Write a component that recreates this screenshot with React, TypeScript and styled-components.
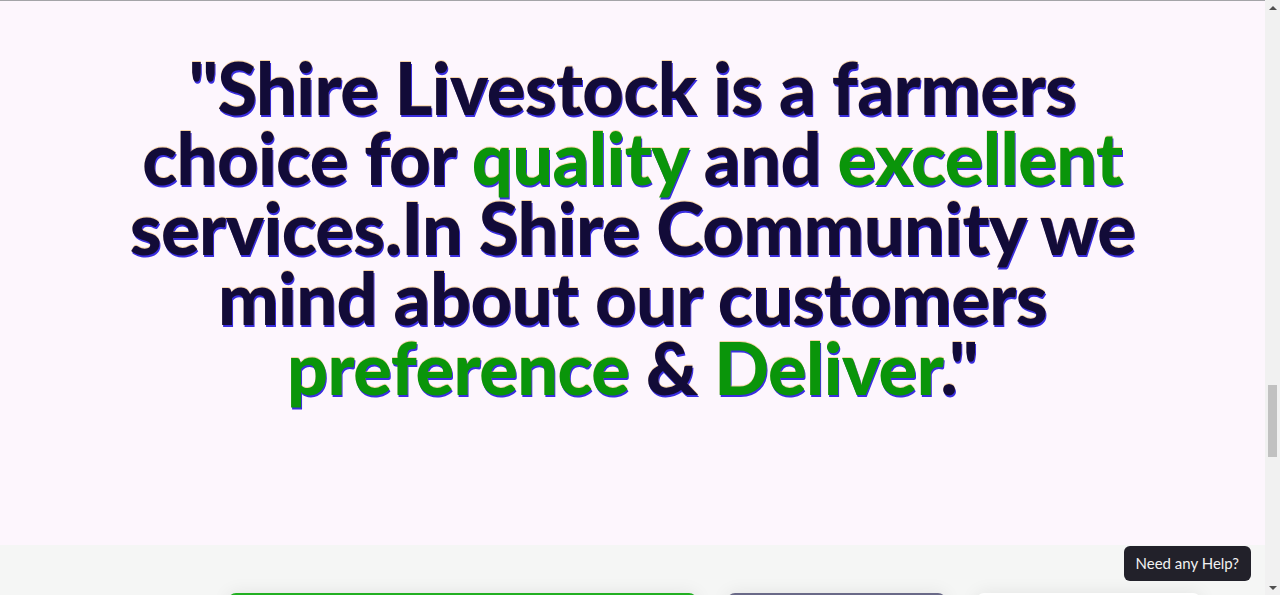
import React from "react";
import styled, { createGlobalStyle } from "styled-components";

const Global = createGlobalStyle`
  html, body { margin: 0; padding: 0; overflow: hidden; }
  body { font-family: Lato, "Noto Sans", sans-serif; background: #fdf6fd; }
`;

const Page = styled.div`
  width: 1280px;
  height: 595px;
  display: flex;
  overflow: hidden;
  position: relative;
`;

const Main = styled.div`
  flex: 1;
  display: flex;
  flex-direction: column;
  border-top: 1px solid #a4a4a8;
  min-width: 0;
  overflow: hidden;
`;

const QuoteSection = styled.section`
  height: 544px;
  flex-shrink: 0;
  background: #fdf6fd;
  display: flex;
  justify-content: center;
  padding-top: 51px;
  box-sizing: border-box;
`;

const Quote = styled.h1`
  margin: 0;
  width: 1060px;
  text-align: center;
  font-family: Lato, sans-serif;
  font-weight: 900;
  font-size: 72px;
  line-height: 70px;
  letter-spacing: -0.55px;
  color: #120b38;
  text-shadow: 0 -1px 0 rgba(240, 170, 60, 0.45), 1px 2px 0 #3a2ee0;
`;

const Accent = styled.span`
  color: #0a950a;
`;

const Lower = styled.section`
  flex-shrink: 0;
  height: 120px;
  background: #f5f6f5;
  display: flex;
  justify-content: flex-start;
  gap: 30px;
  padding-top: 48px;
  padding-left: 228px;
  box-sizing: border-box;
`;

const Card = styled.div<{ $w: number; $top: string; $bg: string }>`
  width: ${(p) => p.$w}px;
  height: 40px;
  border-radius: 8px 8px 0 0;
  border-top: 2px solid ${(p) => p.$top};
  background: ${(p) => p.$bg};
  box-shadow: 0 0 18px rgba(0, 0, 0, 0.08);
  flex-shrink: 0;
`;

const Scrollbar = styled.div`
  width: 15px;
  background: #f1f1f1;
  display: flex;
  flex-direction: column;
  align-items: center;
`;

const Arrow = styled.div<{ $up?: boolean }>`
  height: 15px;
  width: 15px;
  display: flex;
  align-items: center;
  justify-content: center;
  &::before {
    content: "";
    border-left: 4px solid transparent;
    border-right: 4px solid transparent;
    ${(p) => (p.$up ? "border-bottom: 4px solid #505050;" : "border-top: 4px solid #505050;")}
  }
`;

const Track = styled.div`
  flex: 1;
  width: 100%;
  display: flex;
  justify-content: center;
  padding-top: 370px;
  box-sizing: border-box;
`;

const Thumb = styled.div`
  width: 9px;
  height: 72px;
  background: #c1c1c1;
`;

const HelpButton = styled.button`
  position: absolute;
  right: 29px;
  bottom: 14px;
  height: 35px;
  padding: 0 12px;
  border: none;
  border-radius: 6px;
  background: #22212a;
  color: #f1f1f1;
  font-family: Lato, sans-serif;
  font-size: 15px;
  line-height: 32px;
  padding-bottom: 2px;
  cursor: pointer;
`;

export default function App() {
  return (
    <Page>
      <Global />
      <Main>
        <QuoteSection>
          <Quote>
            "Shire Livestock is a farmers choice for <Accent>quality</Accent> and{" "}
            <Accent>excellent</Accent> services.In Shire Community we mind about our customers{" "}
            <Accent>preference</Accent> &amp; <Accent>Deliver</Accent>."
          </Quote>
        </QuoteSection>
        <Lower>
          <Card $w={469} $top="#22b022" $bg="#1d9c1d" />
          <Card $w={219} $top="#6a6a88" $bg="#4c4a66" />
          <Card $w={225} $top="#ffffff" $bg="#ffffff" />
        </Lower>
      </Main>
      <Scrollbar>
        <Arrow $up />
        <Track>
          <Thumb />
        </Track>
        <Arrow />
      </Scrollbar>
      <HelpButton>Need any Help?</HelpButton>
    </Page>
  );
}
